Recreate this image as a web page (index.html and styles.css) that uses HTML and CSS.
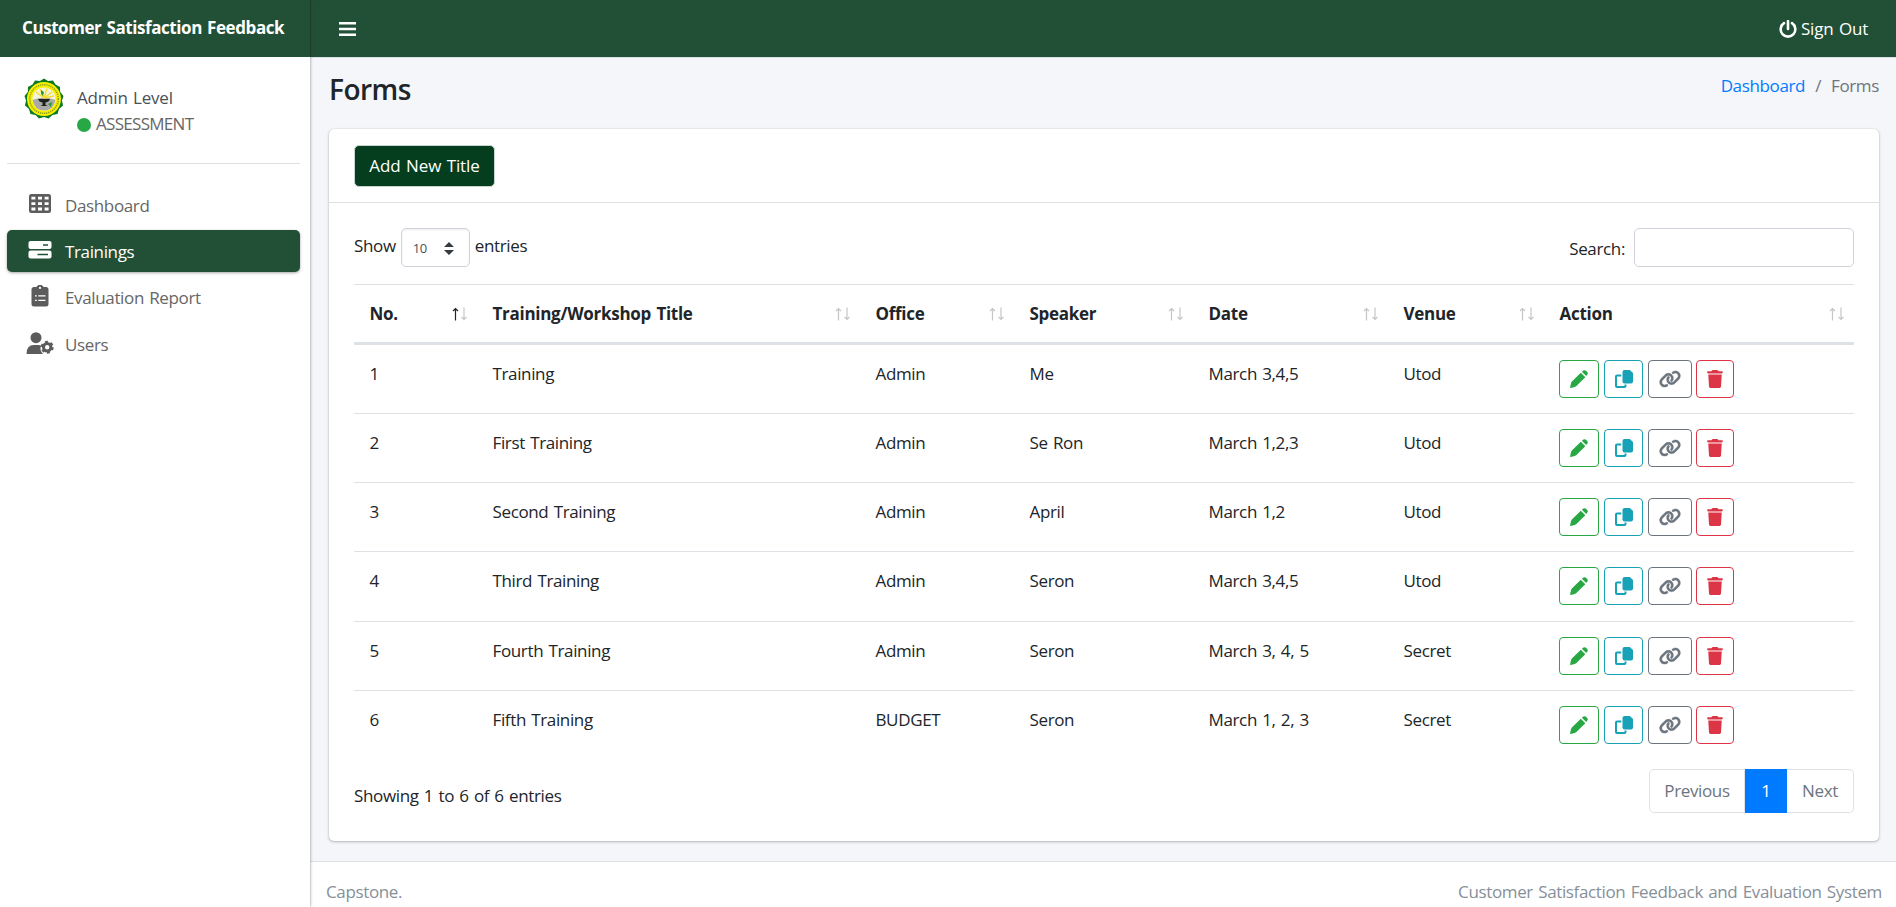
FILE: index.html
```html
<!DOCTYPE html>
<html lang="en">
<head>
<meta charset="utf-8">
<title>Customer Satisfaction Feedback</title>
<link rel="stylesheet" href="styles.css">
</head>
<body>
<svg class="sprite" aria-hidden="true">
  <symbol id="pencil" viewBox="0 0 18 18"><path d="M10.800 2.700 1.900 11.600Q1.300 12.300 1 13.300L.1 17.200Q0 18 .8 17.900L4.700 17Q5.700 16.700 6.400 16.100L15.300 7.200ZM11.900 1.800 13.400.600Q14.800-.400 16 .800L17.200 2Q18.400 3.200 17.300 4.600L16.200 6.100Z"/></symbol>
  <symbol id="copy" viewBox="0 0 18 18"><path d="M9.500 0H14.800L18 3V11.500Q18 13.500 16 13.500H9.500Q7.500 13.500 7.500 11.500V2Q7.500 0 9.500 0Z"/><path d="M6.300 5.500H2Q1 5.500 1 6.500V16Q1 17 2 17H9.500Q10.500 17 10.500 16V14.600" fill="none" stroke="currentColor" stroke-width="2"/></symbol>
  <symbol id="link" viewBox="0 0 640 512"><path stroke="currentColor" stroke-width="12" d="M579.800 267.700c56.500-56.500 56.500-148 0-204.500c-50-50-128.800-56.500-186.300-15.400l-1.600 1.100c-14.400 10.300-17.700 30.300-7.400 44.600s30.300 17.700 44.600 7.400l1.600-1.100c32.100-22.900 76-19.300 103.800 8.600c31.500 31.500 31.500 82.500 0 114L422.300 334.800c-31.500 31.500-82.500 31.500-114 0c-27.900-27.900-31.500-71.800-8.600-103.800l1.100-1.600c10.300-14.400 6.900-34.400-7.400-44.600s-34.400-6.900-44.600 7.400l-1.100 1.600C206.500 251.200 213 330 263 380c56.500 56.500 148 56.500 204.500 0L579.800 267.700zM60.200 244.300c-56.500 56.500-56.500 148 0 204.500c50 50 128.800 56.500 186.300 15.400l1.600-1.100c14.400-10.300 17.700-30.300 7.400-44.600s-30.300-17.700-44.600-7.400l-1.600 1.100c-32.100 22.900-76 19.300-103.800-8.600C74 372 74 321 105.500 289.500L217.700 177.200c31.500-31.500 82.500-31.500 114 0c27.900 27.900 31.500 71.800 8.600 103.900l-1.100 1.600c-10.300 14.400-6.900 34.400 7.400 44.600s34.400 6.900 44.600-7.400l1.100-1.600C433.500 260.800 427 182 377 132c-56.500-56.500-148-56.500-204.500 0L60.200 244.300z"/></symbol>
  <symbol id="trash" viewBox="0 0 448 512"><path d="M135.200 17.700L128 32H32C14.300 32 0 46.300 0 64S14.300 96 32 96H416c17.700 0 32-14.300 32-32s-14.300-32-32-32H320l-7.200-14.300C307.400 6.800 296.300 0 284.200 0H163.800c-12.100 0-23.200 6.800-28.600 17.700zM416 128H32L53.200 467c1.600 25.300 22.600 45 47.900 45H346.900c25.300 0 46.300-19.700 47.900-45L416 128z"/></symbol>
</svg>

<div class="app">
  <aside class="sidebar">
    <div class="brand"><span>Customer Satisfaction Feedback</span></div>
    <div class="user">
      <svg class="seal" viewBox="0 0 40 42">
        <path fill="#0b7a22" d="M20 .5 24 3 29 2.500 31.500 6.500 36 9 36.200 14 39.500 18 38 22.500 39 27.500 35 31 33.500 36 28.500 37 24.500 40.500 20 39 15 40.500 11.500 37 6.500 36 5 31 1 27.500 2 22.500.5 18 3.800 14 4 9 8.500 6.500 11 2.500 16 3Z"/>
        <circle cx="20" cy="21" r="17" fill="#f8f000"/>
        <circle cx="20" cy="21" r="14.300" fill="none" stroke="#8a9c12" stroke-width="1.500" stroke-dasharray="1.200 .9"/>
        <circle cx="20" cy="21" r="11.500" fill="#f4f3df"/>
        <path d="M8.700 22Q20 17 31.300 22Q30 32 20 32.500Q10 32 8.700 22Z" fill="#a9aaa8"/>
        <path d="M20 20 12 14M20 20 16 11M20 20 23 10.500M20 20 28 14M20 20 30 18" stroke="#f4dc33" stroke-width="1.500"/>
        <path d="M14 21H26Q25 24 21.500 24.500V27L24 28H16.500L18.500 27V24.500Q15 24 14 21Z" fill="#1c211c"/>
        <path d="m17 12 3 2-1 4-2-2ZM24 26l4-2-1 5Z" fill="#2c9b35"/>
      </svg>
      <div class="who">
        <span class="level">Admin Level</span>
        <span class="role"><i class="dot"></i>ASSESSMENT</span>
      </div>
    </div>
    <nav class="menu">
      <a class="item"><svg class="ico" viewBox="0 0 26 22"><path fill-rule="evenodd" d="M4.500 1H21.500Q24 1 24 3.500V17.500Q24 20 21.500 20H4.500Q2 20 2 17.500V3.500Q2 1 4.500 1ZM4.400 3.800V6.500H8.400V3.800ZM11 3.800V6.500H15V3.800ZM17.600 3.800V6.500H21.600V3.800ZM4.400 9.200V12H8.400V9.200ZM11 9.200V12H15V9.200ZM17.600 9.200V12H21.600V9.200ZM4.400 14.600V17.400H8.400V14.600ZM11 14.600V17.400H15V14.600ZM17.600 14.600V17.400H21.600V14.600Z"/></svg><span>Dashboard</span></a>
      <a class="item active"><svg class="ico" viewBox="0 0 26 22"><rect x="1.500" y="2" width="23" height="8" rx="2"/><rect x="1.500" y="11.500" width="23" height="8" rx="2"/><path d="M16 6H21M10.500 15.500H21" stroke="#225036" stroke-width="1.300"/></svg><span>Trainings</span></a>
      <a class="item"><svg class="ico" viewBox="0 0 26 22"><path fill-rule="evenodd" d="M7 2H9.500Q10.500-.2 13-.2T16.500 2H19Q21.500 2 21.500 4.500V19Q21.500 21.500 19 21.500H7Q4.500 21.500 4.500 19V4.500Q4.500 2 7 2ZM13 1.800A1.100 1.100 0 1 0 13 4A1.100 1.100 0 1 0 13 1.800Z"/><path d="M8 10.800H9.800M11.300 10.800H18.500M8 15.300H9.800M11.300 15.300H18.500" stroke="#fff" stroke-width="1.300"/></svg><span>Evaluation Report</span></a>
      <a class="item"><svg class="ico wide" viewBox="0 0 28 23"><circle cx="10" cy="5.700" r="5.500"/><path d="M.5 22Q.5 13 8 13H12.500Q14 13 15.300 13.800Q13.500 17 15.500 20L17 22Z"/><circle cx="21.200" cy="15.300" r="3.700" fill="none" stroke="currentColor" stroke-width="3"/><circle cx="21.200" cy="15.300" r="5.400" fill="none" stroke="currentColor" stroke-width="2.200" stroke-dasharray="2.800 2.850"/></svg><span>Users</span></a>
    </nav>
  </aside>

  <div class="main">
    <header class="topbar">
      <svg class="burger" viewBox="0 0 17 14"><path d="M0 1.200H17M0 7H17M0 12.800H17" stroke="#fff" stroke-width="2.400"/></svg>
      <a class="signout"><svg class="power" viewBox="0 0 18 18"><path d="M5 3.200A7.300 7.300 0 1 0 13 3.200M9 1V9" fill="none" stroke="#fff" stroke-width="2.600" stroke-linecap="round"/></svg><span>Sign Out</span></a>
    </header>

    <div class="pagehead">
      <h1>Forms</h1>
      <div class="crumbs"><a>Dashboard</a><span class="slash">/</span><span>Forms</span></div>
    </div>

    <section class="card">
      <div class="card-head"><button class="add">Add New Title</button></div>
      <div class="card-body">
        <div class="controls">
          <div class="length"><span>Show</span>
            <span class="select"><span>10</span><svg viewBox="0 0 10 13"><path d="M5 0 10 5H0ZM5 13 0 8H10Z"/></svg></span>
            <span>entries</span></div>
          <label class="search"><span>Search:</span><input type="text"></label>
        </div>
        <table class="grid">
          <colgroup><col class="c1"><col class="c2"><col class="c3"><col class="c4"><col class="c5"><col class="c6"><col class="c7"></colgroup>
          <thead><tr id="head"></tr></thead>
          <tbody id="rows"></tbody>
        </table>
        <div class="foot">
          <span class="info">Showing 1 to 6 of 6 entries</span>
          <div class="pager"><span class="prev">Previous</span><span class="cur">1</span><span class="next">Next</span></div>
        </div>
      </div>
    </section>

    <footer class="footer"><span>Capstone.</span><span>Customer Satisfaction Feedback and Evaluation System</span></footer>
  </div>
</div>
<script src="table.js"></script>
</body>
</html>
```

FILE: styles.css
```css
* { box-sizing: border-box; }
body {
  margin: 0;
  font-family: "Open Sans", "Noto Sans", sans-serif;
  font-size: 17px;
  line-height: 27px;
  letter-spacing: -0.36px;
  word-spacing: 1.2px;
  color: #212529;
  background: #f4f6f9;
}
.sprite { position: absolute; width: 0; height: 0; }
svg { fill: currentColor; display: block; flex: none; }
.app { display: flex; height: 907px; overflow: hidden; }

.sidebar {
  width: 310px; flex: none; background: #fff; position: relative; z-index: 1;
  box-shadow: 0 0 3px rgba(0,0,0,.45);
}
.brand {
  height: 57px; background: #225036; color: #fff; font-weight: 700;
  padding: 14px 0 0 22px; white-space: nowrap; letter-spacing: -0.43px;
  box-shadow: 1px 0 0 #1b432c;
}
.user {
  display: flex; gap: 13px; margin: 0 10px 0 7px; padding: 21px 0 0 17px;
  height: 107px; border-bottom: 1px solid #dee2e6;
}
.seal { width: 40px; height: 42px; }
.who { display: flex; flex-direction: column; padding-top: 6px; }
.level { color: #495057; letter-spacing: -.2px; }
.role { color: #666; display: flex; align-items: center; gap: 5px; letter-spacing: -.7px; margin-top: -1px; }
.dot { width: 14px; height: 14px; border-radius: 50%; background: #28a745; margin-top: 2px; }
.menu { display: flex; flex-direction: column; gap: 4px; margin: 20px 10px 0 7px; }
.item {
  height: 42px; border-radius: 5px; display: flex; padding: 9px 0 0 20px; color: #666;
}
.item span { padding-left: 12px; margin-top: -1px; }
.item:last-child span { margin-top: 0; }
.ico { width: 26px; height: 22px; color: #5c5c5c; }
.wide { width: 28px; height: 23px; margin: 1px -1px 0; }
.item.active { background: #225036; color: #fff; box-shadow: 0 1px 3px rgba(0,0,0,.35); }
.active .ico { color: #fff; }

.main { flex: 1; display: flex; flex-direction: column; min-width: 0; }
.topbar {
  height: 57px; flex: none; background: #225036; color: #fff; display: flex;
  justify-content: space-between; align-items: center; padding: 0 28px 0 29px;
}
.burger { width: 17px; height: 14px; }
.signout { display: flex; align-items: center; gap: 4px; letter-spacing: -.2px; }
.power { width: 18px; height: 18px; }
.pagehead {
  height: 72px; flex: none; display: flex; justify-content: space-between;
  padding: 14px 17px 0 19px; border-top: 1px solid #dee2e6;
}
h1 { margin: 0; font-size: 28px; font-weight: 600; line-height: 34px; letter-spacing: -.5px; }
.crumbs { display: flex; color: #6c757d; }
.crumbs a { color: #007bff; }
.slash { padding: 0 10px; }

.card {
  margin: 0 17px 0 19px; height: 712px; flex: none; background: #fff; border-radius: 5px;
  box-shadow: 0 0 1px rgba(0,0,0,.2), 0 1px 3px rgba(0,0,0,.25);
}
.card-head { height: 74px; padding: 16px 25px; border-bottom: 1px solid #dfdfdf; }
.add {
  font: inherit; letter-spacing: -.12px; color: #fff; background: #043e1e; border: 1px solid #c9d6ce;
  border-radius: 5px; height: 42px; width: 141px; padding: 0 0 2px; word-spacing: 1.2px;
}
.card-body { padding: 25px; }
.controls { display: flex; justify-content: space-between; height: 56px; }
.length { display: flex; gap: 5px; line-height: 36px; }
.select {
  width: 69px; height: 39px; border: 1px solid #ced4da; border-radius: 5px; display: flex;
  justify-content: space-between; align-items: center; padding: 1px 15px 0 11px;
  font-size: 13px; color: #495057; box-shadow: inset 0 1px 2px rgba(0,0,0,.075);
}
.select svg { width: 10px; height: 13px; color: #343a40; }
.search { display: flex; gap: 9px; line-height: 41px; }
.search input { width: 220px; height: 39px; border: 1px solid #ced4da; border-radius: 5px; }

.grid { width: 1500px; table-layout: fixed; border-collapse: separate; border-spacing: 0; }
.c1 { width: 123px; } .c2 { width: 383px; } .c3 { width: 154px; } .c4 { width: 179px; }
.c5 { width: 195px; } .c6 { width: 156px; } .c7 { width: 310px; }
.grid th {
  height: 61px; padding: 0 9px 0 15.500px; text-align: left; font-weight: 700; letter-spacing: -.28px;
  border-top: 1px solid #dee2e6; border-bottom: 3px solid #dee2e6;
}
.th { display: flex; justify-content: space-between; align-items: center; }
.sort { width: 16px; height: 14px; fill: none; stroke: #c6c6c8; stroke-width: 1.200; }
.sort .on { stroke: #212529; }
.grid td { height: 69.2px; padding: 15px 0 0 15.500px; vertical-align: top; border-top: 1px solid #dee2e6; }
.grid td:last-child { padding-left: 15px; }
.grid tbody tr:first-child td { border-top: 0; height: 68px; }
.acts { display: flex; }
.btn {
  height: 38px; border: 1px solid; border-radius: 4px; display: flex; align-items: center; justify-content: center;
}
.edit { width: 40px; color: #28a745; margin-right: 5px; }
.dup { width: 39px; color: #17a2b8; margin-right: 5px; }
.lnk { width: 44px; color: #6c757d; margin-right: 4px; }
.del { width: 38px; color: #dc3545; }
.btn svg { width: 18px; height: 18px; }
.lnk svg { width: 22px; }
.del svg { width: 16px; }

.foot { display: flex; justify-content: space-between; padding-top: 10px; }
.info { padding-top: 13px; }
.pager { display: flex; height: 44px; line-height: 42px; color: #6c757d; text-align: center; }
.pager span { border: 1px solid #dee2e6; }
.prev { width: 96px; border-radius: 5px 0 0 5px; }
.pager .cur { width: 42px; background: #007bff; border-color: #007bff; color: #fff; }
.pager .next { width: 67px; border-left: 0; border-radius: 0 5px 5px 0; }

.footer {
  margin-top: 20px; flex: 1; background: #fff; border-top: 1px solid #dee2e6; color: #869099;
  display: flex; justify-content: space-between; padding: 16px 14px 0 16px;
}
```

FILE: table.js
```js
const columns = ["No.", "Training/Workshop Title", "Office", "Speaker", "Date", "Venue", "Action"];
const data = [
  ["1", "Training", "Admin", "Me", "March 3,4,5", "Utod"],
  ["2", "First Training", "Admin", "Se Ron", "March 1,2,3", "Utod"],
  ["3", "Second Training", "Admin", "April", "March 1,2", "Utod"],
  ["4", "Third Training", "Admin", "Seron", "March 3,4,5", "Utod"],
  ["5", "Fourth Training", "Admin", "Seron", "March 3, 4, 5", "Secret"],
  ["6", "Fifth Training", "BUDGET", "Seron", "March 1, 2, 3", "Secret"]
];
const icon = (cls, id) => `<a class="btn ${cls}"><svg><use href="#${id}"/></svg></a>`;
const actions = `<td><div class="acts">${icon("edit", "pencil")}${icon("dup", "copy")}${icon("lnk", "link")}${icon("del", "trash")}</div></td>`;

document.getElementById("head").innerHTML = columns.map((c, i) =>
  `<th><div class="th"><span>${c}</span><svg class="sort" viewBox="0 0 16 14"><path class="${i ? "" : "on"}" d="M3.500 13.500V1.500M1 4 3.500 1.500 6 4"/><path d="M12 .5V12.500M9.500 10 12 12.500 14.500 10"/></svg></div></th>`).join("");
document.getElementById("rows").innerHTML = data.map(r =>
  `<tr>${r.map(v => `<td>${v}</td>`).join("")}${actions}</tr>`).join("");
```
